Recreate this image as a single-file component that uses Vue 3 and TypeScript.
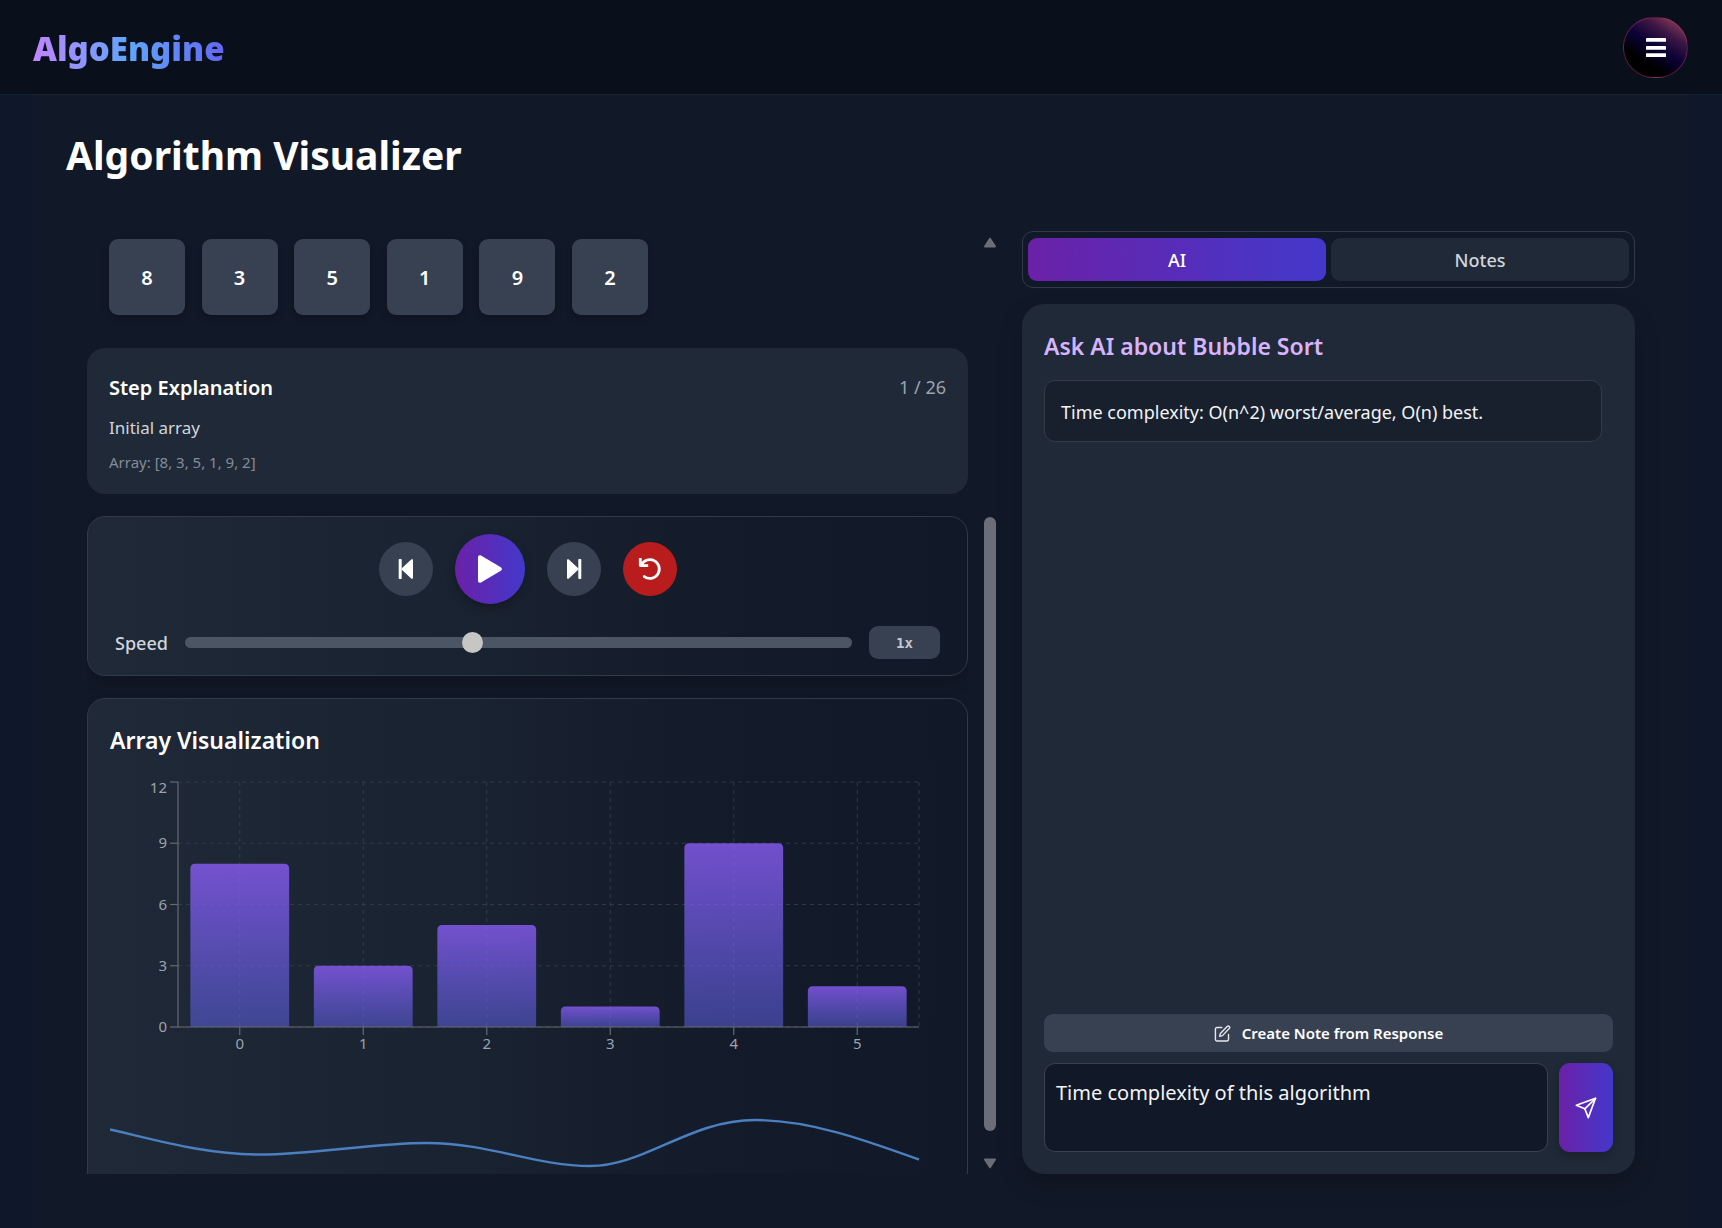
<script setup lang="ts">
import { computed, ref } from 'vue'

const values = [8, 3, 5, 1, 9, 2]
const yTicks = [0, 3, 6, 9, 12]
const tabs = ['AI', 'Notes']

const activeTab = ref('AI')
const speed = ref(1)
const question = ref('Time complexity of this algorithm')

const plot = { left: 68, right: 809, top: 12, bottom: 257, max: 12 }
const slot = (plot.right - plot.left) / values.length

const yOf = (v: number): number => plot.bottom - (v / plot.max) * (plot.bottom - plot.top)
const xOf = (i: number): number => plot.left + slot * (i + 0.5)

const bars = computed(() =>
  values.map((v, i) => {
    const w = slot * 0.8
    const x = xOf(i) - w / 2
    const y = yOf(v)
    const r = 5
    return {
      center: xOf(i),
      d: `M${x},${plot.bottom}V${y + r}Q${x},${y} ${x + r},${y}H${x + w - r}Q${x + w},${y} ${x + w},${y + r}V${plot.bottom}Z`,
    }
  }),
)
</script>

<template>
  <div class="page">
    <header class="topbar">
      <a class="logo" href="#">AlgoEngine</a>
      <button class="menu" type="button" aria-label="Menu">
        <svg width="20" height="20" viewBox="0 0 20 20" fill="#fff">
          <rect x="0" y="1" width="20" height="3.8" rx="0.4" />
          <rect x="0" y="9" width="20" height="3.8" rx="0.4" />
          <rect x="0" y="16.200" width="20" height="3.8" rx="0.4" />
        </svg>
      </button>
    </header>

    <main class="content">
      <h1>Algorithm Visualizer</h1>

      <div class="panels">
        <section class="left">
          <div class="scroller">
            <div class="cells">
              <div v-for="(v, i) in values" :key="i" class="cell">{{ v }}</div>
            </div>

            <section class="step">
              <div class="step-head">
                <h2>Step Explanation</h2>
                <span class="count">1 / 26</span>
              </div>
              <p class="step-text">Initial array</p>
              <p class="step-array">Array: [8, 3, 5, 1, 9, 2]</p>
            </section>

            <section class="controls">
              <div class="buttons">
                <button class="round" type="button" aria-label="Previous step">
                  <svg width="16" height="20" viewBox="0 0 16 20" fill="#fff">
                    <rect x="0.700" y="0" width="3" height="20" rx="0.8" />
                    <path d="M13.200 0.500C14 -0.200 15 0.200 15 1.200V18.800C15 19.800 14 20.200 13.200 19.500L3.800 10.800Q3 10 3.800 9.200Z" />
                  </svg>
                </button>
                <button class="round play" type="button" aria-label="Play">
                  <svg width="26" height="28" viewBox="0 0 26 28" fill="#fff">
                    <path d="M1 2.200C1 0.500 2.600 -0.200 4 0.600L23.800 12.300C25.200 13.200 25.200 14.800 23.800 15.700L4 27.400C2.600 28.200 1 27.500 1 25.800Z" />
                  </svg>
                </button>
                <button class="round" type="button" aria-label="Next step">
                  <svg width="16" height="20" viewBox="0 0 16 20" fill="#fff">
                    <rect x="12.300" y="0" width="3" height="20" rx="0.8" />
                    <path d="M2.800 0.500C2 -0.200 1 0.200 1 1.200V18.800C1 19.800 2 20.200 2.800 19.500L12.200 10.800Q13 10 12.200 9.200Z" />
                  </svg>
                </button>
                <button class="round reset" type="button" aria-label="Reset">
                  <svg width="24" height="24" viewBox="0 0 24 24" fill="none" stroke="#fff" stroke-width="2.800" stroke-linecap="round">
                    <path d="M3.500 7.800A9.400 9.400 0 1 1 6.300 19.600" />
                    <path d="M2.300 1V8.600H10.200" stroke-linecap="butt" stroke-linejoin="round" />
                    <path d="M2 3L7.500 8.500H2Z" fill="#fff" stroke="none" />
                  </svg>
                </button>
              </div>
              <div class="speed">
                <label for="speed">Speed</label>
                <input id="speed" v-model.number="speed" type="range" min="0.25" max="2" step="0.25" />
                <output class="rate" for="speed">{{ speed }}x</output>
              </div>
            </section>

            <section class="viz">
              <h2>Array Visualization</h2>
              <svg class="chart" viewBox="0 0 836 430" role="img" aria-label="Array values">
                <defs>
                  <linearGradient id="bar" x1="0" y1="0" x2="0" y2="1">
                    <stop offset="0" stop-color="#8b5cf6" stop-opacity="0.8" />
                    <stop offset="1" stop-color="#6366f1" stop-opacity="0.5" />
                  </linearGradient>
                </defs>
                <g class="grid">
                  <line v-for="t in yTicks" :key="'h' + t" :x1="plot.left" :x2="plot.right" :y1="yOf(t)" :y2="yOf(t)" />
                  <line v-for="(b, i) in bars" :key="'v' + i" :x1="b.center" :x2="b.center" :y1="plot.top" :y2="plot.bottom" />
                  <line :x1="plot.right" :x2="plot.right" :y1="plot.top" :y2="plot.bottom" />
                </g>
                <path v-for="(b, i) in bars" :key="'b' + i" :d="b.d" fill="url(#bar)" />
                <g class="axis">
                  <line :x1="plot.left" :x2="plot.left" :y1="plot.top" :y2="plot.bottom" />
                  <line :x1="plot.left" :x2="plot.right" :y1="plot.bottom" :y2="plot.bottom" />
                  <line v-for="t in yTicks" :key="'ty' + t" :x1="plot.left - 8" :x2="plot.left" :y1="yOf(t)" :y2="yOf(t)" />
                  <line v-for="(b, i) in bars" :key="'tx' + i" :x1="b.center" :x2="b.center" :y1="plot.bottom" :y2="plot.bottom + 8" />
                </g>
                <g class="labels">
                  <text v-for="t in yTicks" :key="'ly' + t" :x="plot.left - 11" :y="t === 12 ? yOf(t) + 11 : yOf(t) + 5" text-anchor="end">{{ t }}</text>
                  <text v-for="(b, i) in bars" :key="'lx' + i" :x="b.center" :y="plot.bottom + 22" text-anchor="middle">{{ i }}</text>
                </g>
                <path
                  class="trend"
                  d="M0 359.500C50 371 96 384.500 150 384.500C205 384.500 262 373 317 373C380 373 425 396 480 396C535 396 580 350 645 350C700 350 755 370 809 389.500"
                />
              </svg>
            </section>
          </div>

          <div class="bar" aria-hidden="true">
            <svg width="14" height="11" viewBox="0 0 14 11"><path d="M7 1.700L12 9.500H2Z" /></svg>
            <div class="track"><div class="thumb"></div></div>
            <svg width="14" height="11" viewBox="0 0 14 11"><path d="M7 9.300L12 1.500H2Z" /></svg>
          </div>
        </section>

        <aside class="right">
          <div class="tabs" role="tablist">
            <button
              v-for="t in tabs"
              :key="t"
              type="button"
              role="tab"
              class="tab"
              :class="{ active: t === activeTab }"
              :aria-selected="t === activeTab"
              @click="activeTab = t"
            >
              {{ t }}
            </button>
          </div>

          <section class="chat">
            <h2>Ask AI about Bubble Sort</h2>
            <div class="messages">
              <p class="message">Time complexity: O(n^2) worst/average, O(n) best.</p>
            </div>
            <button class="note" type="button">
              <svg width="17" height="17" viewBox="0 0 24 24" fill="none" stroke="currentColor" stroke-width="2" stroke-linecap="round" stroke-linejoin="round">
                <path d="M11 3.500H4a2 2 0 0 0-2 2V20.500a2 2 0 0 0 2 2H18.500a2 2 0 0 0 2-2V13.500" />
                <path d="M18.500 2a2.121 2.121 0 0 1 3 3L12 15l-4 1 1-4Z" />
              </svg>
              Create Note from Response
            </button>
            <form class="ask" @submit.prevent>
              <textarea v-model="question" aria-label="Question"></textarea>
              <button class="send" type="submit" aria-label="Send">
                <svg width="22" height="22" viewBox="0 0 22 22" fill="none" stroke="#fff" stroke-width="1.700" stroke-linejoin="round" stroke-linecap="round">
                  <path d="M20.500 1.300L1.300 8.200L9.800 11.800L13.300 20.600Z" />
                  <path d="M20.500 1.300L9.800 11.800" />
                </svg>
              </button>
            </form>
          </section>
        </aside>
      </div>
    </main>
  </div>
</template>

<style>
body {
  margin: 0;
  background: #0f172a;
}
</style>

<style scoped>
.page {
  display: flex;
  flex-direction: column;
  height: 100vh;
  overflow: hidden;
  background: #0f172a;
  color: #fff;
  font-family: 'Noto Sans', 'Open Sans', sans-serif;
}
* {
  box-sizing: border-box;
}
h1,
h2,
p {
  margin: 0;
}
button,
textarea {
  font-family: inherit;
}
button {
  display: flex;
  align-items: center;
  justify-content: center;
  padding: 0;
  border: 0;
  color: #fff;
  cursor: pointer;
}
svg {
  display: block;
}

.topbar {
  display: flex;
  align-items: center;
  justify-content: space-between;
  flex: none;
  height: 95px;
  padding: 0 34px 0 33px;
  background: #0a0f1c;
  border-bottom: 1px solid #1a212e;
}
.logo {
  padding-top: 4px;
  font-size: 33px;
  line-height: 44px;
  font-weight: 900;
  text-decoration: none;
  color: transparent;
  background: linear-gradient(90deg, #c084fc, #60a5fa, #6366f1);
  -webkit-background-clip: text;
  background-clip: text;
}
.menu {
  width: 65px;
  height: 61px;
  border: 1px solid rgba(170, 50, 100, 0.5);
  border-radius: 32px;
  background: linear-gradient(212deg, #8a3c58 8%, #3c1644 28%, #0c0236 48%, #000 72%);
}

.content {
  display: flex;
  flex-direction: column;
  flex: 1;
  min-height: 0;
  margin: 0 33px;
  padding: 38px 33px 54px;
  background: #111827;
}
h1 {
  margin-bottom: 53px;
  font-size: 39px;
  line-height: 44px;
  font-weight: 700;
}
.panels {
  display: grid;
  grid-template-columns: minmax(0, 909fr) minmax(0, 613fr);
  gap: 26px;
  flex: 1;
  min-height: 0;
  padding: 0 21px;
}

.left {
  display: flex;
  gap: 16px;
  min-height: 0;
}
.scroller {
  flex: 1;
  min-width: 0;
  overflow: hidden;
}
.cells {
  display: flex;
  justify-content: space-between;
  max-width: 583px;
  margin-bottom: 23px;
  padding: 9px 22px 10px;
}
.cell {
  display: flex;
  align-items: center;
  justify-content: center;
  width: 76px;
  height: 76px;
  border-radius: 9px;
  background: #374151;
  box-shadow: 0 4px 7px rgba(0, 0, 0, 0.2);
  font-size: 20px;
  font-weight: 600;
}
.step {
  margin-bottom: 22px;
  padding: 24px 22px 21px;
  border-radius: 18px;
  background: #1f2937;
}
.step-head {
  display: flex;
  align-items: center;
  justify-content: space-between;
  margin-bottom: 12px;
}
.step h2 {
  font-size: 20px;
  line-height: 31px;
  font-weight: 600;
}
.count {
  font-size: 18px;
  line-height: 31px;
  color: #9ca3af;
}
.step-text {
  margin-bottom: 10px;
  font-size: 17px;
  line-height: 26px;
  color: #d1d5db;
}
.step-array {
  font-size: 15px;
  line-height: 22px;
  color: #848c98;
}

.controls,
.viz {
  border: 1px solid #313a47;
  border-radius: 18px;
  background: linear-gradient(90deg, #1f2937, #192230 45%, #131a29 75%, #111827);
  box-shadow: 0 8px 14px rgba(0, 0, 0, 0.15);
}
.controls {
  margin-bottom: 22px;
  padding: 17px 27px 16px;
}
.buttons {
  display: flex;
  align-items: center;
  justify-content: center;
  gap: 22px;
  margin-bottom: 22px;
}
.round {
  width: 54px;
  height: 54px;
  border-radius: 50%;
  background: #374151;
}
.play {
  width: 70px;
  height: 70px;
  background: linear-gradient(90deg, #6b21a8, #4338ca);
  box-shadow: 0 4px 10px rgba(0, 0, 0, 0.25);
}
.reset {
  background: #b91c1c;
}
.speed {
  display: flex;
  align-items: center;
  gap: 17px;
}
.speed label {
  padding-top: 2px;
  font-size: 18px;
  line-height: 31px;
  font-weight: 500;
  color: #d1d5db;
}
.speed input {
  flex: 1;
  min-width: 0;
  height: 11px;
  margin: 0;
  border-radius: 6px;
  background: #4b5563;
  appearance: none;
}
.speed input::-webkit-slider-thumb {
  appearance: none;
  width: 21px;
  height: 21px;
  border-radius: 50%;
  background: #c6c6c4;
}
.rate {
  width: 71px;
  padding-top: 2px;
  border-radius: 9px;
  background: #374151;
  color: #c3c8d0;
  font-family: 'DejaVu Sans Mono', monospace;
  font-size: 14px;
  font-weight: 600;
  line-height: 31px;
  text-align: center;
}

.viz {
  padding: 26px 21px 22px 22px;
}
.viz h2 {
  margin-bottom: 14px;
  font-size: 23px;
  line-height: 31px;
  font-weight: 600;
}
.chart {
  width: 100%;
  height: auto;
}
.grid line {
  stroke: #374151;
  stroke-opacity: 0.75;
  stroke-width: 1.1;
  stroke-dasharray: 4 4;
}
.axis line {
  stroke: #666a70;
  stroke-width: 1.2;
}
.labels text {
  font-size: 15px;
  fill: #9ca3af;
}
.trend {
  fill: none;
  stroke: #4a7fc0;
  stroke-width: 2.4;
}

.bar {
  display: flex;
  flex-direction: column;
  align-items: center;
  flex: none;
  width: 12px;
  padding: 7px 0 5px;
}
.bar path {
  fill: #6b6e78;
  stroke: #6b6e78;
  stroke-width: 2;
  stroke-linejoin: round;
}
.track {
  display: flex;
  flex-direction: column;
  justify-content: flex-end;
  flex: 1;
  width: 12px;
  padding-bottom: 27px;
}
.thumb {
  height: calc(70% - 4px);
  border-radius: 6px;
  background: #6b6e78;
}

.right {
  display: flex;
  flex-direction: column;
  gap: 16px;
  min-height: 0;
}
.tabs {
  display: flex;
  gap: 5px;
  margin-top: 1px;
  padding: 6px 5px;
  border: 1px solid #313a47;
  border-radius: 11px;
}
.tab {
  flex: 1;
  height: 43px;
  padding-top: 1px;
  border-radius: 9px;
  background: #1f2937;
  color: #d1d5db;
  font-size: 18px;
  font-weight: 500;
}
.tab.active {
  background: linear-gradient(90deg, #6b21a8, #4338ca);
  color: #fff;
}
.chat {
  display: flex;
  flex-direction: column;
  flex: 1;
  min-height: 0;
  padding: 27px 22px 22px;
  border-radius: 22px;
  background: #1f2937;
  box-shadow: 0 10px 24px rgba(0, 0, 0, 0.18);
}
.chat h2 {
  margin-bottom: 18px;
  font-size: 23px;
  line-height: 31px;
  font-weight: 600;
  color: #d8b4fe;
}
.messages {
  flex: 1;
  min-height: 0;
  margin-right: 11px;
}
.message {
  padding: 17px 16px 15px;
  border: 1px solid #313a47;
  border-radius: 11px;
  background: #18202e;
  color: #f3f4f6;
  font-size: 18px;
  line-height: 28px;
}
.note {
  gap: 11px;
  height: 38px;
  margin-bottom: 11px;
  border-radius: 9px;
  background: #374151;
  font-size: 15px;
  font-weight: 600;
}
.note svg {
  color: #e5e7eb;
}
.ask {
  display: flex;
  gap: 11px;
}
.ask textarea {
  display: block;
  flex: 1;
  min-width: 0;
  height: 89px;
  padding: 11px;
  border: 1px solid #374151;
  border-radius: 11px;
  outline: none;
  background: #111827;
  color: #f3f4f6;
  font-size: 20px;
  line-height: 36px;
  resize: none;
}
.send {
  width: 54px;
  border-radius: 11px;
  background: linear-gradient(90deg, #6b21a8, #4338ca);
  box-shadow: 0 4px 8px rgba(0, 0, 0, 0.2);
}
</style>
